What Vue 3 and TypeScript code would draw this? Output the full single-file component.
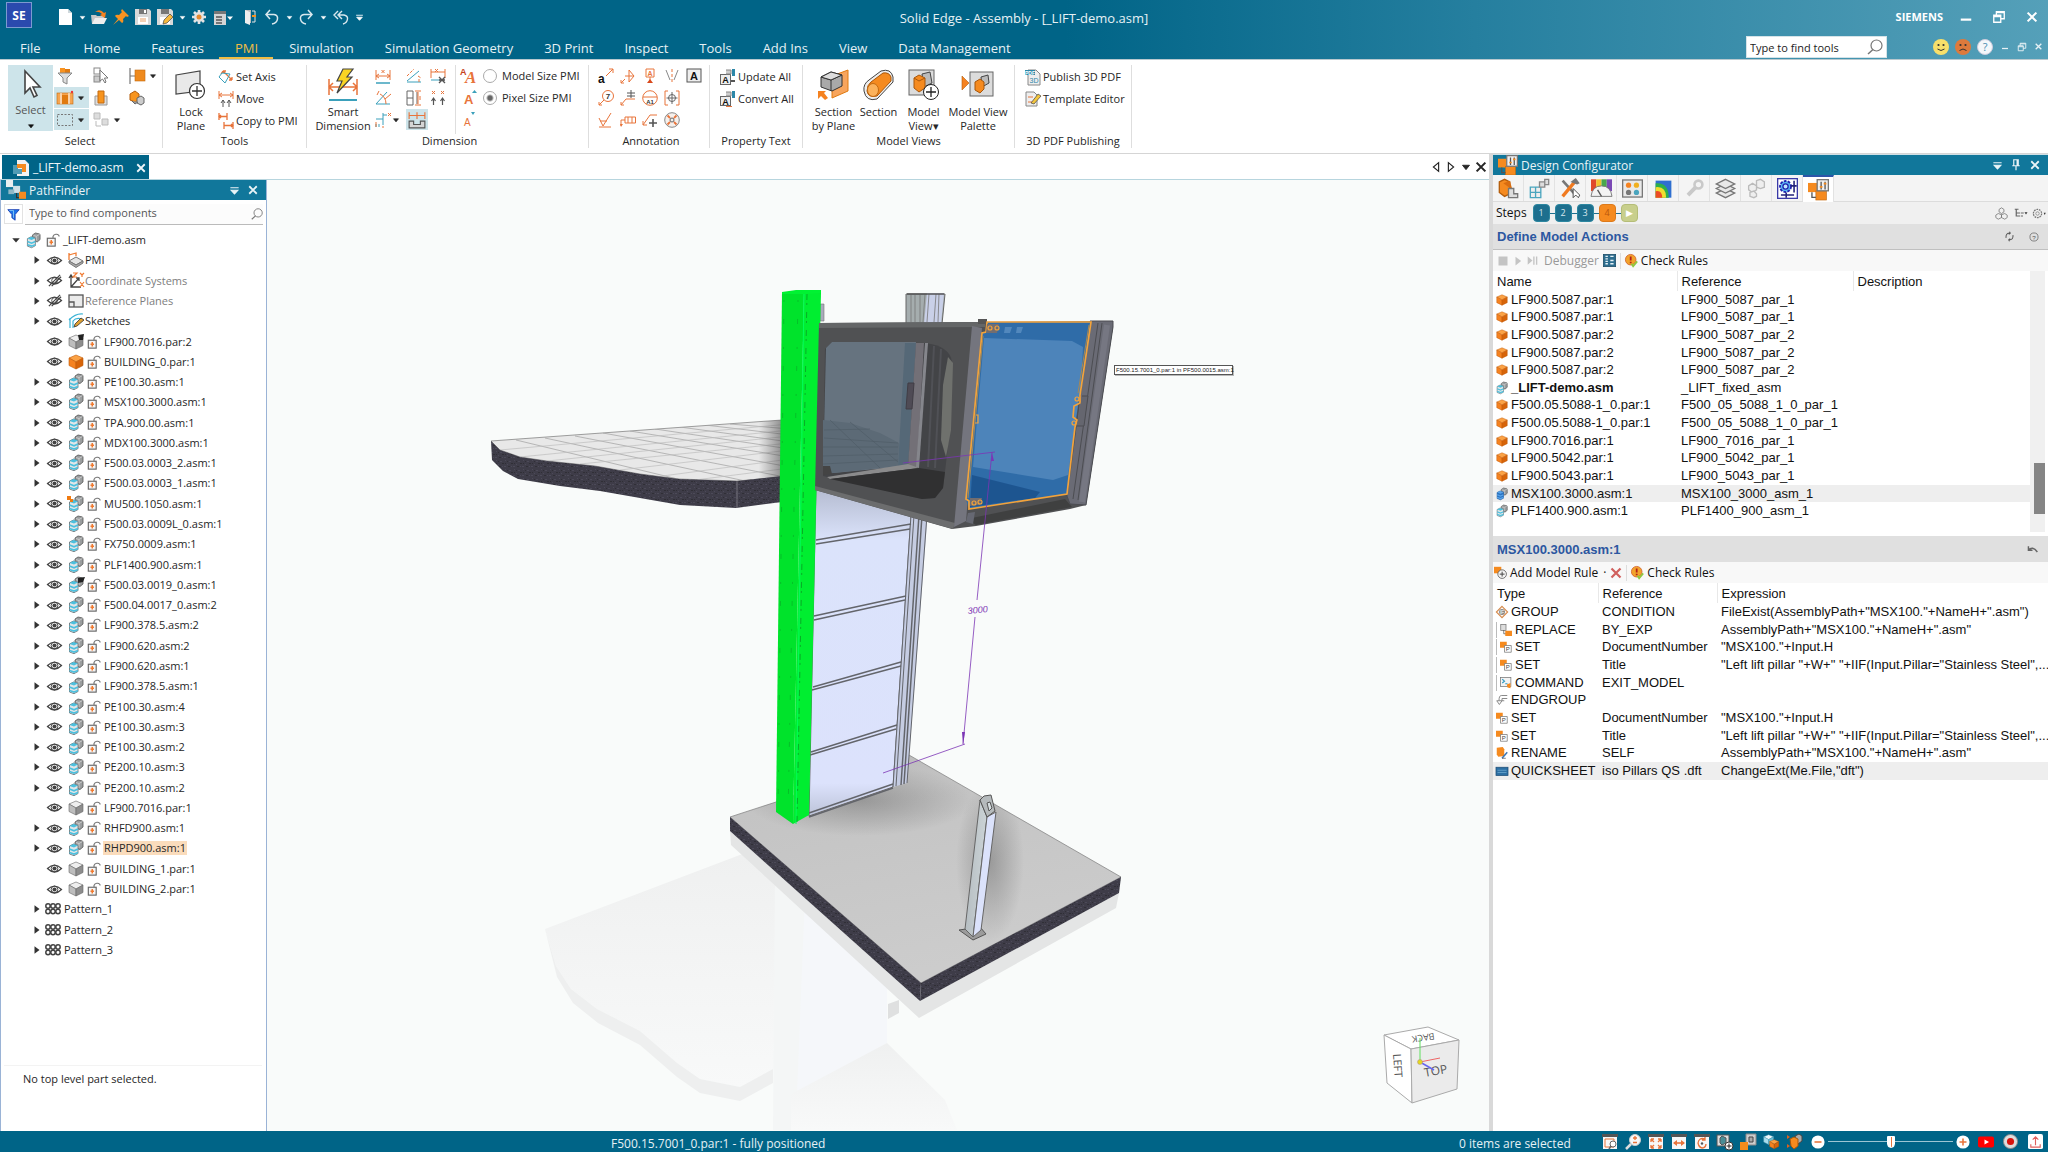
<script setup lang="ts">
import { h, ref } from 'vue'

const O = '#e8743b'
const T = '#3ba0bb'

const cube = (a: string, b: string, c: string, s: string) =>
  `<path d="M8 1L15 4 8 8 1 4Z" fill="${a}" stroke="${s}" stroke-width=".6"/><path d="M1 4L8 8V15L1 11.500Z" fill="${b}" stroke="${s}" stroke-width=".6"/><path d="M15 4L8 8V15L15 11.500Z" fill="${c}" stroke="${s}" stroke-width=".6"/>`
const asm = (a: string, b: string, s: string) =>
  `<path d="M7 2L10 0 14.500 1 15 2V7L12 9.500 7 8Z" fill="#9a9d9e" stroke="#555" stroke-width=".8"/><path d="M8 2.500L11 3.500 14.500 1.500M11 3.500V8" fill="none" stroke="#d5d5d5" stroke-width=".8"/><path d="M1.500 6L5.500 4 10 5.500V13.500L6 15.700 1.500 14Z" fill="${b}" stroke="${s}" stroke-width=".8"/><path d="M1.500 6L5.500 4 10 5.500 6 7.500Z" fill="${a}"/><path d="M1.500 9L6 10.800 10 9M1.500 12.500L6 14 10 12.500" fill="none" stroke="${a}" stroke-width="1.700"/>`
const dim = `<path d="M1 3V13M15 3V13M1 8H15M4 6L1 8 4 10M12 6L15 8 12 10" fill="none" stroke="${O}"/>`
const frame = `<rect x="1" y="1" width="14" height="14" fill="#f7f7f7"/><path d="M0 0H16V3H0Z" fill="#555"/>`

const icons: Record<string, string> = {
  doc: '<path d="M2 0H11L15 4V16H2Z" fill="#fff"/><path d="M11 0V4H15" fill="#cfd8dc"/>',
  open: '<path d="M0 6H5L6 7H13V15H1Z" fill="#c8c8c8"/><path d="M1 15L4 9H16L13 15Z" fill="#eee"/><path d="M4 3Q9-1 13 4L15 3 14 9 9 6 11 5Q8 2 4 3Z" fill="#f58220"/>',
  pin: '<path d="M9 0L16 7 14 8 13 7 10 10Q11 13 9 14L6 11 0 16 5 10 2 7Q3 5 6 6L9 3 8 2Z" fill="#f99320"/>',
  save: '<path d="M0 0H14L16 2V16H0Z" fill="#d9d9d9"/><rect x="4" y="0" width="8" height="5" fill="#777"/><rect x="9" y="1" width="2" height="3" fill="#fff"/><rect x="3" y="8" width="10" height="7" fill="#fff"/><path d="M5 10H11M5 12H11" stroke="#e9a36c"/>',
  saveas: '<path d="M0 0H14L16 2V16H0Z" fill="#d9d9d9"/><rect x="4" y="0" width="8" height="5" fill="#777"/><rect x="3" y="8" width="10" height="7" fill="#fff"/><path d="M6 15L7 11 13 5 16 8 10 14Z" fill="#f5b83d" stroke="#444" stroke-width=".7"/>',
  gear: '<path d="M8 1V15M1 8H15M3 3L13 13M13 3L3 13" stroke="#e3e3e3" stroke-width="2.600"/><circle cx="8" cy="8" r="5" fill="#e3e3e3"/><circle cx="8" cy="8" r="2.500" fill="#e88a2e"/>',
  list: '<rect x="0" y="1" width="12" height="14" fill="#d5d5d5"/><rect x="0" y="1" width="12" height="3" fill="#777"/><path d="M2 7H8M2 10H8M2 13H8" stroke="#555" stroke-width="1.500"/><path d="M13 6.500H19L16 10Z" fill="#fff"/>',
  exit: '<path d="M3 1H9V14H3Z" fill="#bbb"/><path d="M3 1L8 3V16L3 14Z" fill="#eee"/><path d="M10 2H13V13H10" fill="none" stroke="#e3e3e3"/><path d="M14 7L10 7" stroke="#f99320" stroke-width="2"/>',
  undo: '<path d="M6 1L2 5.500 6 10M2 5.500H10Q14 6 13.500 10 13 14 8 15" fill="none" stroke="#d9e8ee" stroke-width="1.500"/>',
  redo: '<path d="M10 1L14 5.500 10 10M14 5.500H6Q2 6 2.500 10 3 14 8 15" fill="none" stroke="#d9e8ee" stroke-width="1.500"/>',
  undoall: '<path d="M5 2L1 6 5 10M9 2L5 6 9 10M6 6H11Q15 7 14.500 10 14 14 10 15" fill="none" stroke="#d9e8ee" stroke-width="1.400"/>',
  car: '<path d="M4 6H12L8 11Z" fill="currentColor" stroke="currentColor"/>',
  carbar: '<path d="M2 4H14M3 7.500H13L8 13Z" fill="currentColor" stroke="currentColor" stroke-width="1.500"/>',
  mini: '<path d="M2 11H14" stroke="currentColor" stroke-width="2.500"/>',
  rest: '<path d="M5 6V2H14V10H10M2 6H10V14H2ZM2 7.500H10M5 3H14" fill="none" stroke="currentColor" stroke-width="1.500"/>',
  x: '<path d="M3 3L13 13M13 3L3 13" stroke="currentColor" stroke-width="2.400"/>',
  pinv: '<path d="M5 1H11V9H5ZM9.500 1V9M3 9H13M8 9V15" fill="none" stroke="currentColor" stroke-width="1.600"/>',
  mag: '<circle cx="9.500" cy="6.500" r="5.500" fill="none" stroke="#777" stroke-width="1.200"/><path d="M6 10.500L1 15" stroke="#777" stroke-width="1.500"/>',
  smile: '<circle cx="8" cy="8" r="8" fill="#f8df6a"/><circle cx="5.500" cy="6" r="1.100" fill="#333"/><circle cx="10.500" cy="6" r="1.100" fill="#333"/><path d="M4.500 10Q8 13 11.500 10" fill="none" stroke="#333"/>',
  sad: '<circle cx="8" cy="8" r="8" fill="#dd7a3c"/><circle cx="5.500" cy="6" r="1.100" fill="#333"/><circle cx="10.500" cy="6" r="1.100" fill="#333"/><path d="M4.500 11.500Q8 8.500 11.500 11.500" fill="none" stroke="#333"/>',
  help: '<circle cx="8" cy="8" r="7.500" fill="#f4f7fa" stroke="#ccd"/><text x="8" y="12" font-size="11" font-family="Open Sans" text-anchor="middle" fill="#4b8db0">?</text>',
  cursor: '<path d="M10 2V24L15 19 19 28 22 26.500 18 18H25Z" fill="#fff" stroke="#444" stroke-width="1.600"/>',
  filt: `<path d="M3 0H8V5H3Z" fill="#f99320"/><path d="M8 1H13V5H8Z" fill="#e07a10"/><path d="M1 5H15L10 10V16L6 14V10Z" fill="#ddd" stroke="#888"/>`,
  selbox: '<rect x="1" y="0" width="6" height="6" fill="none" stroke="#888"/><rect x="1" y="8" width="6" height="6" fill="#ccc" stroke="#888"/><path d="M7 2V13L9.500 11 12 15 13 14 11.500 10H15Z" fill="#fff" stroke="#777"/>',
  tag: '<path d="M1 0V16M1 8H6" stroke="#777" stroke-width="1.200"/><rect x="6" y="2" width="10" height="11" fill="#ef8a1d" stroke="#c46a10" stroke-width=".6"/>',
  selo: '<rect x="0" y="3" width="16" height="11" fill="#f7a550" stroke="#c46a10" stroke-width=".6"/><path d="M4 3V14M12 3V14" stroke="#fff"/><rect x="5" y="5" width="6" height="9" fill="#e07a10"/><circle cx="15" cy="2" r="1.200" fill="#e33"/>',
  part: '<path d="M2 6H14V15H2Z" fill="#ddd" stroke="#999"/><path d="M5 1H11V13H5Z" fill="#f7941e" stroke="#c46a10"/>',
  parts: '<path d="M1 4L6 1 10 4V10L6 12 1 10Z" fill="#f7941e" stroke="#b45d0b"/><path d="M8 8L12 6 15 8V13L12 15 8 13Z" fill="#ccc" stroke="#666"/><path d="M3 11L6 14 9 12" fill="#999" stroke="#666"/>',
  dash: '<rect x="0.500" y="2.500" width="15" height="11" fill="none" stroke="#777" stroke-dasharray="2 1.500"/>',
  grays: '<path d="M1 1H7V7H1ZM9 7H15V13H9Z" fill="#ddd" stroke="#bbb"/><path d="M3 9V14H8" fill="none" stroke="#bbb"/>',
  lock: '<path d="M1 6L25 2V22L1 25Z" fill="#e9e9e9" stroke="#444" stroke-width="1.200"/><circle cx="22" cy="22" r="7.500" fill="#fff" stroke="#333" stroke-width="1.200"/><path d="M22 17V27M17 22H27" stroke="#333" stroke-width="1.300"/>',
  axis: `<path d="M5 2L14 11M5 2L3 5M5 2L8 2M14 11V8M14 11H11" stroke="${O}" stroke-width="1.300" fill="none"/><path d="M1 8L7 14L12 5L4 4Z" fill="none" stroke="${T}"/>`,
  move: `<path d="M1 0V8M15 0V8M1 4H15M4 2L1 4 4 6M12 2L15 4 12 6" fill="none" stroke="${O}"/><path d="M5 16V9M11 16V9M3 12L5 9 7 12M9 12L11 9 13 12" fill="none" stroke="#555"/>`,
  copyp: `<path d="M1 0V7M9 0V7M1 3.500H9M6 9V16M15 9V16M6 12.500H15M3 2L1 3.500 3 5M13 11L15 12.500 13 14" fill="none" stroke="${O}" stroke-width="1.300"/>`,
  smart: `<path d="M2 10V26M30 10V26M2 18H30M6 14L2 18 6 22M26 14L30 18 26 22" fill="none" stroke="${O}" stroke-width="1.500"/><path d="M2 31H30" stroke="${T}" stroke-width="2"/><path d="M16 0H26L20 8H25L10 24 15 12H10Z" fill="#f9d423" stroke="#444" stroke-width="1.200"/>`,
  d1: `${dim.replace('M1 3V13M15 3V13', 'M1 2V12M15 2V12')}<path d="M6.500 2L9.500 5M9.500 2L6.500 5" stroke="${O}"/><path d="M1 15H15" stroke="${T}" stroke-width="1.500"/>`,
  d2: `<path d="M1 14L12 2M1 14H15" stroke="${T}" fill="none"/><path d="M5 4Q11 7 11 14M10 9L16 4M4 1L2 5" fill="none" stroke="${O}"/>`,
  d3: `<path d="M1 13L13 3M1 14H15" stroke="${T}"/><path d="M1 8L8 1M12 8L15 10M13 14V11" stroke="${O}" stroke-dasharray="3 1.500"/>`,
  d4: `<path d="M1 1V10M15 1V10M1 4H15M5 1L8 4M8 1L5 4" stroke="${O}"/><path d="M1 12H10" stroke="${T}"/><path d="M9 9L15 15M15 9L9 15M9 12H15" stroke="#555" stroke-width="1.400"/>`,
  d5: `<path d="M1 1H7V15H1ZM7 8H1M11 2V14" fill="none" stroke="#666"/><path d="M9 1H15M9 15H15M12 2V14M14 6V10" stroke="${O}"/>`,
  d6: `<path d="M2 1L5 4M5 1L2 4M11 1L14 4M14 1L11 4" stroke="${O}"/><path d="M3.500 15V8M12.500 15V8M1.500 11L3.500 8 5.500 11M10.500 11L12.500 8 14.500 11" fill="none" stroke="#555" stroke-width="1.200"/>`,
  d7: `<path d="M8 1V13M1 7H8M8 3H12M1 15V12M4 15V12" stroke="${T}" fill="none"/><path d="M1 10V15M8 14V16M13 1L16 4M16 1L13 4" stroke="${O}"/>`,
  d8: `<path d="M1 1V7M8 1V7M15 1V7M1 4H15" stroke="${O}"/><path d="M1 9H5V12H11V9H15V15H1Z" fill="#d5d5d5" stroke="#555"/>`,
  a1: `<text x="4" y="15" font-size="17" font-weight="bold" font-style="italic" font-family="Liberation Serif" fill="${O}">A</text><text x="-1" y="7" font-size="9" font-weight="bold" font-family="Liberation Sans" fill="#c5401b">A</text>`,
  a2: `<text x="3" y="14" font-size="13" font-weight="bold" font-family="Liberation Sans" fill="${O}">A</text><path d="M11 3L13.500 0 16 3Z" fill="${T}"/>`,
  a3: `<text x="3" y="14" font-size="10" font-family="Liberation Sans" fill="${O}">A</text><path d="M10 0L12 3 14 0Z" fill="${T}"/>`,
  n1: `<text x="0" y="15" font-size="12" font-weight="bold" font-family="Liberation Sans" fill="#111">a</text><path d="M8 8L15 1M11 1H15V5" fill="none" stroke="${O}"/>`,
  n2: `<path d="M1 15L5 11M5 8H14L9 2V14L14 8M1 12V15H4" fill="none" stroke="${O}"/>`,
  n3: `<path d="M4 1H12V9H4ZM8 9V12" fill="none" stroke="${O}"/><path d="M5 15L8 11 11 15Z" fill="#d8491c"/><text x="8" y="8" font-size="7" font-weight="bold" text-anchor="middle" font-family="Liberation Sans" fill="${O}">A</text>`,
  n4: `<path d="M2 2L6 12M14 2L10 12" stroke="#888"/><path d="M8 1V15" stroke="${O}" stroke-dasharray="3 2"/>`,
  n5: '<rect x="1" y="1" width="14" height="13" fill="#eee" stroke="#555"/><text x="8" y="12" font-size="11" font-weight="bold" text-anchor="middle" font-family="Liberation Sans" fill="#111">A</text>',
  n6: `<circle cx="10" cy="6" r="5.500" fill="none" stroke="${O}"/><path d="M6 10L1 15M1 12V15H4" fill="none" stroke="${O}"/><text x="10" y="9" font-size="8" font-weight="bold" text-anchor="middle" font-family="Liberation Sans" fill="#333">7</text>`,
  n7: `<path d="M1 15L6 9H15M1 12V15H4" fill="none" stroke="${O}"/><path d="M11 0V8M7 3H15M7 6H15" stroke="#555"/>`,
  n8: `<circle cx="8" cy="8" r="7.300" fill="none" stroke="${O}"/><path d="M1 7H15" stroke="${O}"/><text x="8" y="13.500" font-size="6" font-weight="bold" text-anchor="middle" font-family="Liberation Sans" fill="#333">A1</text>`,
  n9: `<path d="M4 1H1V15H4M12 1H15V15H12" fill="none" stroke="${O}"/><circle cx="8" cy="8" r="3.500" fill="none" stroke="#666"/><path d="M8 2V14M2.500 8H13.500" stroke="#666"/>`,
  n10: `<path d="M1 6L5 14 13 1M1 15H13M2 9H9" fill="none" stroke="${O}"/>`,
  n11: `<path d="M5 5H15.500V11H5ZM1 14V8H5M8 5V11M12 5V11" fill="none" stroke="${O}"/><path d="M0 12L1 15 3 12" fill="${O}"/>`,
  n12: `<path d="M1 13L8 3H15M1 9V13H5" fill="none" stroke="${O}"/><path d="M11 7V15M7 11H15" stroke="#555" stroke-width="1.600"/>`,
  n13: `<circle cx="8" cy="8" r="7.300" fill="#f6f0ec" stroke="#888"/><circle cx="8" cy="8" r="2" fill="none" stroke="#666"/><path d="M3.500 3.500L6 6M12.500 3.500L10 6M3.500 12.500L6 10M12.500 12.500L10 10" stroke="${O}" stroke-width="1.800"/>`,
  upd: `<rect x="0.500" y="5.500" width="10" height="10" fill="#eee" stroke="#666"/><text x="5.500" y="14" font-size="9" font-weight="bold" text-anchor="middle" font-family="Liberation Sans" fill="#111">A</text><path d="M6 1H11V5H6" fill="#ccc" stroke="#888"/><path d="M12 0H15V7H12Z" fill="#2d87a8"/><path d="M11 12H15" stroke="#555" stroke-width="2"/>`,
  conv: `<rect x="0.500" y="5.500" width="10" height="9" fill="#eee" stroke="#666"/><text x="5.500" y="13.500" font-size="9" font-weight="bold" text-anchor="middle" font-family="Liberation Sans" fill="#111">A</text><path d="M6 1H11V5H6" fill="#ccc" stroke="#888"/><path d="M12 0H15V7H12Z" fill="#2d87a8"/><path d="M6 15.500H12" stroke="${O}"/>`,
  secp: '<path d="M14 7L30 1V22L14 29Z" fill="#f7a55d" stroke="#e07a10"/><path d="M3 8L13 3 24 6V17L14 22 3 18Z" fill="#a9a9a9" stroke="#333"/><path d="M3 8L13 11 24 6M13 11V22" fill="none" stroke="#333"/><path d="M3 8L13 3 24 6 13 11Z" fill="#ddd" stroke="#333"/><path d="M0 22H8L6 24 10 29 7 31 3 27 0 30Z" fill="#f58220"/>',
  sect: '<path d="M1 22Q0 15 6 11L18 2Q28-1 30 8V13L14 30Q3 33 1 22Z" fill="#eee" stroke="#444"/><path d="M4 22Q4 16 8 13L20 4Q26 3 28 8V12L14 27Q5 29 4 22Z" fill="#f58a1f" stroke="#a8560a"/><ellipse cx="10" cy="21" rx="5.500" ry="6.500" fill="#fbb25c" stroke="#c46a10"/>',
  mview: '<rect x="1" y="1" width="25" height="25" fill="#dcdcdc" stroke="#666"/><path d="M14 5L22 3 24 14 16 18Z" fill="#bbb" stroke="#444"/><path d="M6 9L11 6 17 9V19L11 23 6 19Z" fill="#f58a1f" stroke="#a8560a"/><path d="M6 9L11 12 17 9" fill="none" stroke="#a8560a"/><circle cx="23" cy="23" r="7.500" fill="#fff" stroke="#222"/><path d="M23 18V28M18 23H28" stroke="#222" stroke-width="1.300"/>',
  mpal: '<path d="M0 7L7 14 0 21Z" fill="#f58220" stroke="#b45d0b" stroke-width=".6"/><rect x="8" y="3" width="23" height="24" fill="#dcdcdc" stroke="#666"/><path d="M19 8L26 6 27 14 20 18Z" fill="#bbb" stroke="#444"/><path d="M13 13L18 10 22 13V20L18 24 13 21Z" fill="#f58a1f" stroke="#a8560a"/>',
  pdf: '<path d="M3 1H11L15 5V16H3Z" fill="#eee" stroke="#888"/><rect x="0" y="1" width="10" height="5" fill="#2d87a8"/><text x="5" y="5.500" font-size="5" font-weight="bold" text-anchor="middle" font-family="Liberation Sans" fill="#fff">PDF</text><text x="9" y="14" font-size="7" text-anchor="middle" font-family="Liberation Sans" fill="#2d87a8">3D</text>',
  tmpl: `<path d="M1 1H9L12 4V15H1Z" fill="#eee" stroke="#888"/><path d="M3 6H8M3 11H10" stroke="${O}"/><path d="M6 12L13 3 16 5 9 13Z" fill="#f5c73d" stroke="#444" stroke-width=".7"/>`,
  tabdoc: '<path d="M4 0H12L16 4V16H4Z" fill="#f2f2f2"/><path d="M0 5H5V9H9V14H0Z" fill="#4f9bb5"/><path d="M4 4H13V12H9V8H4Z" fill="#f58a1f"/>',
  pf: '<rect x="0" y="0" width="6" height="6" fill="#e9eef0"/><rect x="6" y="5" width="6" height="6" fill="#cfe0e6"/><rect x="2" y="8" width="5" height="4" fill="#8fb8c6"/><path d="M9 11V15H12" stroke="#333" fill="none"/><rect x="11" y="10" width="6" height="6" fill="#f58a1f"/>',
  funnel: '<path d="M1 2H15L10 8V15L6 12V8Z" fill="#1e73e8" stroke="#1238b0"/><path d="M3 3H8L8 12" fill="none" stroke="#8fd0f5"/>',
  cd: '<path d="M2 5H14L8 12Z" fill="#333"/>',
  cr: '<path d="M4 2L12 8 4 14Z" fill="#333"/>',
  eye: '<path d="M0.500 8Q8 0.500 15.500 8 8 15.500 0.500 8Z" fill="#fff" stroke="#444" stroke-width="1.300"/><circle cx="8" cy="8" r="3.600" fill="none" stroke="#444"/><circle cx="8" cy="8" r="2.200" fill="#444"/>',
  eyeoff: '<path d="M0.500 8Q8 0.500 15.500 8 8 15.500 0.500 8Z" fill="#fff" stroke="#444" stroke-width="1.300"/><circle cx="8" cy="8" r="3" fill="none" stroke="#444"/><path d="M2 14L14 2M5 14L15 4" stroke="#444" stroke-width="1.300"/>',
  asm: asm('#4cc0de', '#e2e6e8', '#5d6b70'),
  asmblue: asm('#5aa5ea', '#2a74c4', '#1d5599'),
  asmfree: asm('#4cc0de', '#e2e6e8', '#5d6b70') + '<path d="M-1 0H3V3H5V6H2V4H-1Z" fill="#f07a10"/>',
  asmpin: asm('#4cc0de', '#e2e6e8', '#5d6b70') + '<path d="M10 1L17 0 15 5 10 6Z" fill="#222"/>',
  partg: cube('#eee', '#bdbdbd', '#8d8d8d', '#666'),
  partpin: cube('#eee', '#bdbdbd', '#8d8d8d', '#666') + '<path d="M10 1L16 0 15 6 11 6Z" fill="#222"/>',
  parto: cube('#fba245', '#f58220', '#d76409', '#c05a08'),
  ulock: '<rect x="1.500" y="6" width="9" height="9" fill="#f4f4f4" stroke="#666" stroke-width="1.300"/><path d="M8 6V4Q9 1 12 1.500 15 2 15 4" fill="none" stroke="#777" stroke-width="1.300"/><path d="M6 8V13M4 10.500H8" stroke="#f07a30" stroke-width="1.700"/>',
  pmi: '<path d="M1 9L8 5 15 9 8 13Z" fill="#e5e5e5" stroke="#777"/><path d="M1 9V11L8 15.500 15 11V9L8 13Z" fill="#aaa" stroke="#777"/><path d="M1 8V1M1 3L8 1V4" fill="none" stroke="#f07a30" stroke-width="1.300"/>',
  cs: '<path d="M3 3V14H13M3 14L11 5M8 5H11V8M1 5L3 2 5 5" fill="none" stroke="#444" stroke-width="1.300"/><path d="M5 0H9L5 4H9M12 0L14 2M14 2V4M16 0L14 2M12 9L16 14M16 9L12 14" fill="none" stroke="#f07a30" stroke-width="1.200"/>',
  rp: '<rect x="1" y="2" width="14" height="12" fill="#eaeaea" stroke="#555" stroke-width="1.300"/><path d="M1 9H6V14" fill="none" stroke="#555" stroke-width="1.300"/>',
  sk: '<path d="M2 15V5M1 7Q8 0 15 1M5 15V8Q8 4 14 6" fill="none" stroke="#3bb3d6" stroke-width="1.200"/><path d="M6 14L7 11 13 5 16 7 9 13Z" fill="#e0a030" stroke="#333" stroke-width=".8"/>',
  pat: '<g fill="none" stroke="#444" stroke-width="1.500"><circle cx="3" cy="5" r="2.200"/><circle cx="8" cy="5" r="2.200"/><circle cx="13" cy="5" r="2.200"/><circle cx="3" cy="10.500" r="2.200"/><circle cx="8" cy="10.500" r="2.200"/><circle cx="13" cy="10.500" r="2.200"/></g>',
  dc: '<rect x="0" y="3" width="7" height="7" fill="#f58a1f"/><rect x="6" y="9" width="8" height="7" fill="#f58a1f" stroke="#c46a10" stroke-width=".5"/><path d="M3 10V14H6" fill="none" stroke="#555"/><rect x="7" y="0.500" width="8.500" height="8.500" fill="#f1f1f1" stroke="#777"/><path d="M10 2V8M13 2V8" stroke="#555"/><path d="M12 3.500H14M9 6H11" stroke="#f58a1f" stroke-width="1.300"/>',
  t1: '<path d="M1 3L5 1 9 3V12L5 14 1 11Z" fill="#f58a1f" stroke="#b45d0b"/><path d="M4 4L9 2 11 9" fill="#d96d10"/><path d="M8 8H12V12H15V15H8Z" fill="#ddd" stroke="#777"/>',
  t2: '<path d="M1 7H5V11H1ZM5 7H9V11H5ZM1 11H5V15H1ZM5 11H9V15H5Z" fill="#eee" stroke="#4aa5be"/><path d="M8 3H12V7H8ZM12 1H15V5H12Z" fill="#ddd" stroke="#888"/>',
  t3: '<path d="M2 2L12 13" stroke="#777" stroke-width="2"/><path d="M12 2L2 14" stroke="#f07a20" stroke-width="2.500"/><path d="M8 3L12 0 15 4 13 5Z" fill="#777"/><path d="M10 8V15L12 13 14 15 15 13Z" fill="#fff" stroke="#444" stroke-width=".7"/>',
  t4: '<rect x="0" y="1" width="4" height="9" fill="#e04a2b"/><rect x="4" y="1" width="4" height="6" fill="#f4c430"/><rect x="8" y="1" width="4" height="6" fill="#49a84d"/><rect x="12" y="1" width="4" height="9" fill="#7b49b5"/><path d="M0 14Q1 6 8 6T16 14Z" fill="#f3f3f3" stroke="#777" stroke-width=".7"/><path d="M8 14L5 9" stroke="#555"/>',
  t5: '<rect x="0.500" y="1.500" width="15" height="13" fill="#e9e9e9" stroke="#777"/><circle cx="5" cy="5.500" r="2" fill="#f58220"/><circle cx="11" cy="5.500" r="2" fill="#f0b020"/><circle cx="5" cy="11" r="2" fill="#777"/><circle cx="11" cy="11" r="2" fill="#4aa5be"/>',
  t6: '<rect x="2" y="2" width="12" height="13" fill="#2f6fd0"/><path d="M2 4Q12 3 12 15H2Z" fill="#2fb04a"/><path d="M2 7Q10 6 10 15H2Z" fill="#f2dd30"/><path d="M2 10Q7 9 7 15H2Z" fill="#ec4c25"/>',
  t7: '<circle cx="11" cy="5" r="3" fill="none" stroke="#c9c9c9" stroke-width="2"/><path d="M9 7L3 13" stroke="#c9c9c9" stroke-width="3"/>',
  t8: '<g fill="#e8e8e8" stroke="#777"><path d="M8 8L15 11.500 8 15 1 11.500Z"/><path d="M8 4.500L15 8 8 11.500 1 8Z"/><path d="M8 1L15 4.500 8 8 1 4.500Z"/></g>',
  t9: '<g fill="#eee" stroke="#bbb"><path d="M8 2L11 1 14 3V7L11 8 8 7Z"/><path d="M2 6L5 4 8 6V9L5 11 2 9Z"/><path d="M3 11L6 10 8 12V14L6 15 3 14Z"/></g>',
  t10: '<rect x="0.500" y="0.500" width="15" height="15" fill="#fff" stroke="#3a3aa8" stroke-width="1"/><circle cx="6.500" cy="6.500" r="4.200" fill="#59b8f2" stroke="#2222b0" stroke-width="1.400" stroke-dasharray="2 1"/><circle cx="6.500" cy="6.500" r="2" fill="#bfe6ff" stroke="#2222b0"/><path d="M13 2V11M10.500 6H15M3 13H13M7 11V15" stroke="#22227a" stroke-width="1.200"/>',
  stp: '<rect x="2" y="2" width="12" height="12" fill="#c4c4c4"/>',
  ply: '<path d="M4 1L13 8 4 15Z" fill="#c4c4c4"/>',
  plb: '<path d="M1 2L8 8 1 14ZM9 2H11V14H9ZM13 2H15V14H13Z" fill="#c4c4c4"/>',
  dbg: '<rect x="0.500" y="0.500" width="15" height="15" fill="#2d6d8e" stroke="#20506a"/><path d="M3 3H6M3 6H6M3 9H6M3 12H6M9 3H13M9 8H13M9 12H13" stroke="#e6f2f7" stroke-width="1.600"/>',
  chk: '<circle cx="7" cy="7" r="6.500" fill="#f2a32b" stroke="#d3602a"/><path d="M7 3V8M7 9.500V11.500" stroke="#b3201a" stroke-width="2.200"/><path d="M8 12L10 15 15 9" fill="none" stroke="#8fc63d" stroke-width="2.200"/>',
  boxes: '<g fill="none" stroke="#777"><path d="M8 1L11 3V6L8 8 5 6V3ZM4 8L8 9.500V13L4 15 1 13V10ZM12 8L15 10V13L12 15 8 13V9.500Z"/></g>',
  tree: '<path d="M1 3H6M3 3V12H8M3 8H8M9 8H13M9 12H12" fill="none" stroke="#666" stroke-width="1.600"/><path d="M14 7H18L16 10Z" fill="#333"/>',
  cog: '<circle cx="8" cy="8" r="6" fill="none" stroke="#777" stroke-width="1.800" stroke-dasharray="2.500 1.200"/><circle cx="8" cy="8" r="2.500" fill="none" stroke="#777"/><path d="M17 7H20L18.500 10Z" fill="#333"/>',
  sync: '<path d="M3 10Q2 3 9 3L8 1M9 3L7 5M13 6Q14 13 7 13L8 15M7 13L9 11" fill="none" stroke="#555" stroke-width="1.500"/>',
  hq: '<circle cx="8" cy="8" r="6.500" fill="none" stroke="#666" stroke-width="1.200"/><text x="8" y="12" font-size="10" text-anchor="middle" font-family="Liberation Sans" fill="#555">?</text>',
  back: '<path d="M3 4V9H8M3 9Q8 3 14 11" fill="none" stroke="#666" stroke-width="1.800"/>',
  addr: '<path d="M0 1H9V9H0Z" fill="#f58a1f"/><circle cx="10" cy="10" r="5.300" fill="#f4f4f4" stroke="#555"/><path d="M10 7V13M7 10H13" stroke="#444" stroke-width="1.200"/>',
  del: '<path d="M2 2L14 14M14 2L2 14" stroke="#d0605e" stroke-width="3"/>',
  grp: '<path d="M8 0.500L15.500 8 8 15.500 0.500 8Z" fill="#fff7ef" stroke="#d58a4c" stroke-width="1.500"/><circle cx="8" cy="8" r="4" fill="#888"/><text x="8" y="11" font-size="7" text-anchor="middle" font-family="Liberation Sans" fill="#fff">IF</text>',
  rep: '<rect x="1" y="0.500" width="7" height="8" fill="#ddd" stroke="#777"/><path d="M5 8V13H8" fill="none" stroke="#555"/><path d="M7 9H16V16H7Z" fill="#f58a1f"/>',
  set: '<path d="M0 1H9V9H0Z" fill="#f58a1f"/><path d="M6 6H15V15H6Z" fill="#fff" stroke="#777"/><text x="10.500" y="13.500" font-size="8" text-anchor="middle" font-family="Liberation Sans" fill="#444">P</text>',
  cmd: '<rect x="0.500" y="0.500" width="14" height="12" fill="#f3f3f3" stroke="#777"/><path d="M3 3L6 5.500 3 8M7 9H10" fill="none" stroke="#2f9ac4" stroke-width="1.500"/><path d="M9 10L14 8V15L10 14Z" fill="#f58a1f"/>',
  endg: '<path d="M15 2H7Q4 2 4 9M1 9L4.500 14 8 9ZM15 6H8V9H11" fill="none" stroke="#888" stroke-width="1.300"/>',
  ren: '<path d="M1 1L9 0 11 3V12L3 13 1 10Z" fill="#f58a1f"/><path d="M8 15L15 7" stroke="#3d77b5" stroke-width="2"/><path d="M8 15H13" stroke="#555"/>',
  qs: '<rect x="0" y="3" width="16" height="11" fill="#2c6fa3" stroke="#1d4d77"/><path d="M2 7H14M2 10H14" stroke="#6da9d0"/>',
  s1: `${frame}<path d="M3 5H12V13H3Z" fill="none" stroke="${O}"/><circle cx="11" cy="10" r="3" fill="#fff" stroke="#666"/><path d="M9 12L7 15" stroke="#666" stroke-width="1.500"/>`,
  s2: `<circle cx="10" cy="6" r="5.500" fill="#f7f7f7" stroke="#ccc"/><path d="M6 10L1 15" stroke="#ddd" stroke-width="2.500"/><path d="M10 2V6M8 4H12M8 8.500H12" stroke="${O}" stroke-width="1.300"/>`,
  s3: `${frame}<path d="M3 5L6 8M3 5H6M3 5V8M13 5L10 8M13 5H10M13 5V8M3 14L6 11M3 14H6M3 14V11M13 14L10 11M13 14H10M13 14V11" stroke="${O}" stroke-width="1.300"/>`,
  s4: `${frame}<path d="M3 9H13" stroke="${O}" stroke-width="1.600"/><path d="M6 6L2 9 6 12ZM10 6L14 9 10 12Z" fill="${O}"/>`,
  s5: `${frame}<path d="M11 5Q5 3 4 9 5 14 9 14 12 13 12 10M11 3V6H8" fill="none" stroke="${O}" stroke-width="1.300"/><circle cx="8" cy="9.500" r="1.200" fill="#555"/>`,
  s6: '<rect x="0" y="1" width="12" height="11" fill="#ddd" stroke="#555"/><path d="M5 2L9 4V9L5 11 3 9V4Z" fill="#4a8d96" stroke="#555"/><circle cx="12" cy="12" r="4" fill="#fff" stroke="#333"/><path d="M12 9.500V14.500M9.500 12H14.500" stroke="#222"/>',
  s7: '<path d="M6 0H16V11H6Z" fill="#ccc" stroke="#888"/><path d="M9 3H13V8H9Z" fill="#aaa" stroke="#444"/><rect x="0" y="8" width="8" height="8" fill="#f28c1c"/>',
  s8: '<g transform="scale(.7)">' + cube('#eef7fa', '#a8dcec', '#6dbcd3', '#4a9ab3') + '</g><g transform="translate(6 5) scale(.65)">' + cube('#fba245', '#f58220', '#d76409', '#a85008') + '</g>',
  s9: '<path d="M1 1L4 3 1 5ZM1 10L4 12 1 14Z" fill="#e0601a"/><path d="M9 2L13 0 16 2V7L12 10Z" fill="#aaa" stroke="#444"/><path d="M4 5L8 3 12 5V12L8 15 5 12Z" fill="#f58a1f" stroke="#a8560a"/>',
  minus: `<circle cx="8" cy="8" r="7.500" fill="#fff"/><path d="M4 8H12" stroke="${O}" stroke-width="1.800"/>`,
  plus: `<circle cx="8" cy="8" r="7.500" fill="#fff"/><path d="M4 8H12M8 4V12" stroke="${O}" stroke-width="1.800"/>`,
  yt: '<rect x="0" y="2.500" width="16" height="11" rx="2" fill="#f00"/><path d="M6.500 5.500L11 8 6.500 10.500Z" fill="#fff"/>',
  rec: '<circle cx="8" cy="8" r="7.500" fill="#ddd" stroke="#888"/><circle cx="8" cy="8" r="3.800" fill="#d8120c"/>',
  up: '<rect x="0" y="0" width="16" height="16" rx="2" fill="#fff"/><path d="M8 12V3M5 6L8 3 11 6M3 11V14H13V11" fill="none" stroke="#e0605e" stroke-width="1.200"/>',
  tl: '<path d="M11 3L5 8 11 13Z" fill="none" stroke="#222" stroke-width="1.300"/>',
  tr: '<path d="M5 3L11 8 5 13Z" fill="none" stroke="#222" stroke-width="1.300"/>',
}

/* s = drawn size in px, v = edge of the square view box */
const Icon = (p: { n: string; s?: number; v?: number }) =>
  h('svg', {
    viewBox: `0 0 ${p.v ?? 16} ${p.v ?? 16}`,
    width: p.s ?? 16,
    height: p.s ?? 16,
    'aria-hidden': 'true',
    style: { flex: 'none', display: 'block', overflow: 'visible' },
    innerHTML: icons[p.n],
  })
Icon.props = ['n', 's', 'v']

const quick = ['doc', 'car', 'open', 'pin', 'save', 'saveas', 'car', 'gear', 'list', 'exit', 'undo', 'car', 'redo', 'car', 'undoall', 'carbar']
const tabs = ['File', 'Home', 'Features', 'PMI', 'Simulation', 'Simulation Geometry', '3D Print', 'Inspect', 'Tools', 'Add Ins', 'View', 'Data Management']
const notes = ['n1', 'n2', 'n3', 'n4', 'n5', 'n6', 'n7', 'n8', 'n9', '', 'n10', 'n11', 'n12', 'n13']
const pmiSize = ref('pixel')
const query = ref('')
const find = ref('')
const zoom = ref(50)

interface Node { t: string; i: string; exp?: boolean; off?: boolean; noLock?: boolean; hot?: boolean; pat?: boolean }
const a = (t: string, i = 'asm'): Node => ({ t, i, exp: true })
const p = (t: string, i = 'partg'): Node => ({ t, i })
const nodes: Node[] = [
  { t: 'PMI', i: 'pmi', exp: true, noLock: true },
  { t: 'Coordinate Systems', i: 'cs', exp: true, noLock: true, off: true },
  { t: 'Reference Planes', i: 'rp', exp: true, noLock: true, off: true },
  { t: 'Sketches', i: 'sk', exp: true, noLock: true },
  p('LF900.7016.par:2', 'partpin'), p('BUILDING_0.par:1', 'parto'),
  a('PE100.30.asm:1'), a('MSX100.3000.asm:1'), a('TPA.900.00.asm:1'), a('MDX100.3000.asm:1'),
  a('F500.03.0003_2.asm:1'), a('F500.03.0003_1.asm:1'), a('MU500.1050.asm:1', 'asmfree'),
  a('F500.03.0009L_0.asm:1'), a('FX750.0009.asm:1'), a('PLF1400.900.asm:1'),
  a('F500.03.0019_0.asm:1', 'asmpin'), a('F500.04.0017_0.asm:2'),
  a('LF900.378.5.asm:2'), a('LF900.620.asm:2'), a('LF900.620.asm:1'), a('LF900.378.5.asm:1'),
  a('PE100.30.asm:4'), a('PE100.30.asm:3'), a('PE100.30.asm:2'), a('PE200.10.asm:3'), a('PE200.10.asm:2'),
  p('LF900.7016.par:1'), a('RHFD900.asm:1'), { t: 'RHPD900.asm:1', i: 'asm', exp: true, hot: true },
  p('BUILDING_1.par:1'), p('BUILDING_2.par:1'),
  { t: 'Pattern_1', i: 'pat', exp: true, pat: true },
  { t: 'Pattern_2', i: 'pat', exp: true, pat: true },
  { t: 'Pattern_3', i: 'pat', exp: true, pat: true },
]

const models = [
  ['parto', 'LF900.5087.par:1', 'LF900_5087_par_1'],
  ['parto', 'LF900.5087.par:1', 'LF900_5087_par_1'],
  ['parto', 'LF900.5087.par:2', 'LF900_5087_par_2'],
  ['parto', 'LF900.5087.par:2', 'LF900_5087_par_2'],
  ['parto', 'LF900.5087.par:2', 'LF900_5087_par_2'],
  ['asm', '_LIFT-demo.asm', '_LIFT_fixed_asm'],
  ['parto', 'F500.05.5088-1_0.par:1', 'F500_05_5088_1_0_par_1'],
  ['parto', 'F500.05.5088-1_0.par:1', 'F500_05_5088_1_0_par_1'],
  ['parto', 'LF900.7016.par:1', 'LF900_7016_par_1'],
  ['parto', 'LF900.5042.par:1', 'LF900_5042_par_1'],
  ['parto', 'LF900.5043.par:1', 'LF900_5043_par_1'],
  ['asmblue', 'MSX100.3000.asm:1', 'MSX100_3000_asm_1'],
  ['asm', 'PLF1400.900.asm:1', 'PLF1400_900_asm_1'],
]
const title = '"Left lift pillar "+W+" "+IIF(Input.Pillar="Stainless Steel",...'
const asmPath = 'AssemblyPath+"MSX100."+NameH+".asm"'
const rules: [string, string, string, string, boolean][] = [
  ['grp', 'GROUP', 'CONDITION', 'FileExist(AssemblyPath+"MSX100."+NameH+".asm")', false],
  ['rep', 'REPLACE', 'BY_EXP', asmPath, true],
  ['set', 'SET', 'DocumentNumber', '"MSX100."+Input.H', true],
  ['set', 'SET', 'Title', title, true],
  ['cmd', 'COMMAND', 'EXIT_MODEL', '', true],
  ['endg', 'ENDGROUP', '', '', false],
  ['set', 'SET', 'DocumentNumber', '"MSX100."+Input.H', false],
  ['set', 'SET', 'Title', title, false],
  ['ren', 'RENAME', 'SELF', asmPath, false],
  ['qs', 'QUICKSHEET', 'iso Pillars QS .dft', 'ChangeExt(Me.File,"dft")', false],
]
const paneTabs = ['t1', 't2', 't3', 't4', 't5', 't6', 't7', 't8', 't9', 't10', 'dc']
const statusIcons = ['s1', 's2', 's3', 's4', 's5', 's6', 's7', 's8', 's9']
</script>

<template>
  <div class="app">
    <header class="top">
      <div class="titlebar">
        <span class="logo">SE</span>
        <nav class="quick" aria-label="Quick access">
          <button v-for="(q, i) in quick" :key="i" :class="['q', q]" :aria-label="q"><Icon :n="q" :s="q.startsWith('car') ? 9 : 16" /></button>
        </nav>
        <h1>Solid Edge - Assembly - [_LIFT-demo.asm]</h1>
        <div class="wins">
          <b>SIEMENS</b>
          <button aria-label="Minimize"><Icon n="mini" :s="14" /></button>
          <button aria-label="Restore"><Icon n="rest" :s="14" /></button>
          <button aria-label="Close"><Icon n="x" :s="14" /></button>
        </div>
      </div>
      <div class="menu">
        <nav class="tabs">
          <button v-for="t in tabs" :key="t" :class="{ on: t === 'PMI', file: t === 'File' }">{{ t }}</button>
        </nav>
        <div class="tools">
          <label class="find"><input v-model="find" placeholder="Type to find tools" aria-label="Find tools" /><Icon n="mag" /></label>
          <button aria-label="Like"><Icon n="smile" /></button>
          <button aria-label="Dislike"><Icon n="sad" /></button>
          <button aria-label="Help"><Icon n="help" /></button>
          <button class="sm" aria-label="Minimize document"><Icon n="mini" :s="8" /></button>
          <button class="sm" aria-label="Restore document"><Icon n="rest" :s="10" /></button>
          <button class="sm" aria-label="Close document"><Icon n="x" :s="9" /></button>
        </div>
      </div>
    </header>

    <section class="ribbon">
      <div class="group g-select">
        <div class="body">
          <button class="big sel"><Icon n="cursor" :s="32" :v="32" /><span>Select</span><Icon n="car" :s="10" /></button>
          <div class="grid3">
            <button aria-label="Filter"><Icon n="filt" /></button>
            <button aria-label="Select tools"><Icon n="selbox" /></button>
            <button aria-label="Tag"><Icon n="tag" /><Icon n="car" :s="10" /></button>
            <button class="hl" aria-label="Part priority"><Icon n="selo" /><Icon n="car" :s="10" /></button>
            <button aria-label="Part"><Icon n="part" /></button>
            <button aria-label="Parts"><Icon n="parts" /></button>
            <button class="hl" aria-label="Fence"><Icon n="dash" /><Icon n="car" :s="10" /></button>
            <button aria-label="Inside"><Icon n="grays" /><Icon n="car" :s="10" /></button>
          </div>
        </div>
        <h2>Select</h2>
      </div>
      <div class="group g-tools">
        <div class="body">
          <button class="big"><Icon n="lock" :s="32" :v="32" /><span>Lock<br />Plane</span></button>
          <div class="list">
            <button><Icon n="axis" />Set Axis</button>
            <button><Icon n="move" />Move</button>
            <button><Icon n="copyp" />Copy to PMI</button>
          </div>
        </div>
        <h2>Tools</h2>
      </div>
      <div class="group g-dim">
        <div class="body">
          <button class="big wide"><Icon n="smart" :s="32" :v="32" /><span>Smart<br />Dimension</span></button>
          <div class="dims">
            <button aria-label="Distance"><Icon n="d1" /></button>
            <button aria-label="Coordinate"><Icon n="d3" /></button>
            <button aria-label="Remove"><Icon n="d4" /></button>
            <button aria-label="Angle"><Icon n="d2" /></button>
            <button aria-label="Diameter"><Icon n="d5" /></button>
            <button aria-label="Attach"><Icon n="d6" /></button>
            <button aria-label="Chain"><Icon n="d7" /><Icon n="car" :s="10" /></button>
            <button class="hl" aria-label="Lock dimension"><Icon n="d8" :s="18" /></button>
          </div>
          <div class="sizes">
            <button aria-label="Style"><Icon n="a1" /></button>
            <label><input v-model="pmiSize" type="radio" value="model" name="pmi" />Model Size PMI</label>
            <button aria-label="Increase font"><Icon n="a2" /></button>
            <label><input v-model="pmiSize" type="radio" value="pixel" name="pmi" />Pixel Size PMI</label>
            <button aria-label="Decrease font"><Icon n="a3" /></button>
          </div>
        </div>
        <h2>Dimension</h2>
      </div>
      <div class="group g-ann">
        <div class="body">
          <div class="notes">
            <template v-for="(n, i) in notes" :key="i">
              <button v-if="n" :aria-label="'Annotation ' + (i + 1)"><Icon :n="n" /></button><span v-else></span>
            </template>
          </div>
        </div>
        <h2>Annotation</h2>
      </div>
      <div class="group g-prop">
        <div class="body">
          <div class="list">
            <button><Icon n="upd" />Update All</button>
            <button><Icon n="conv" />Convert All</button>
          </div>
        </div>
        <h2>Property Text</h2>
      </div>
      <div class="group g-views">
        <div class="body">
          <button class="big"><Icon n="secp" :s="32" :v="32" /><span>Section<br />by Plane</span></button>
          <button class="big"><Icon n="sect" :s="32" :v="32" /><span>Section</span></button>
          <button class="big"><Icon n="mview" :s="32" :v="32" /><span>Model<br />View<i>▾</i></span></button>
          <button class="big wide"><Icon n="mpal" :s="32" :v="32" /><span>Model View<br />Palette</span></button>
        </div>
        <h2>Model Views</h2>
      </div>
      <div class="group g-pdf">
        <div class="body">
          <div class="list">
            <button><Icon n="pdf" />Publish 3D PDF</button>
            <button><Icon n="tmpl" />Template Editor</button>
          </div>
        </div>
        <h2>3D PDF Publishing</h2>
      </div>
    </section>

    <main class="main">
      <div class="work">
        <div class="docbar">
          <div class="doctab"><Icon n="tabdoc" /><span>_LIFT-demo.asm</span><button aria-label="Close tab"><Icon n="x" :s="12" /></button></div>
          <div class="docnav">
            <button aria-label="Previous"><Icon n="tl" :s="14" /></button>
            <button aria-label="Next"><Icon n="tr" :s="14" /></button>
            <button aria-label="Documents"><Icon n="car" :s="14" /></button>
            <button aria-label="Close"><Icon n="x" :s="14" /></button>
          </div>
        </div>
        <div class="split">
          <aside class="path">
            <header class="phead"><Icon n="pf" :s="20" :v="17" /><h3>PathFinder</h3><button aria-label="Options"><Icon n="carbar" :s="11" /></button><button aria-label="Close"><Icon n="x" :s="12" /></button></header>
            <div class="search">
              <button aria-label="Filter"><Icon n="funnel" :s="13" /></button>
              <label><input v-model="query" placeholder="Type to find components" aria-label="Find components" /><Icon n="mag" :s="12" /></label>
            </div>
            <ul class="tree">
              <li class="root"><Icon n="cd" :s="10" /><Icon class="ic" n="asm" :s="15" /><Icon n="ulock" :s="14" /><span>_LIFT-demo.asm</span></li>
              <li v-for="n in nodes" :key="n.t" :class="{ off: n.off, pat: n.pat }">
                <i class="tw"><Icon v-if="n.exp" n="cr" :s="10" /></i>
                <Icon v-if="!n.pat" class="eye" :n="n.off ? 'eyeoff' : 'eye'" :s="15" />
                <Icon class="ic" :n="n.i" />
                <Icon v-if="!n.noLock && !n.pat" n="ulock" :s="14" />
                <span :class="{ hot: n.hot, lk: !n.noLock && !n.pat }">{{ n.t }}</span>
              </li>
            </ul>
            <p class="msg">No top level part selected.</p>
          </aside>

          <div class="view">
            <svg viewBox="267 180 1222 951" preserveAspectRatio="xMidYMid slice">
              <defs>
                <pattern id="grain" width="9" height="9" patternUnits="userSpaceOnUse">
                  <rect width="9" height="9" fill="#3e3c48" />
                  <path d="M1 1h1v1h-1zM5 2h2v1h-2zM3 5h1v1h-1zM7 7h1v1h-1zM0 7h2v1h-2z" fill="#4c4a58" />
                  <path d="M3 2h1v1h-1zM7 4h2v1h-2zM1 4h1v1h-1zM4 7h2v1h-2z" fill="#302f36" />
                </pattern>
                <linearGradient id="floor" x1="0" y1="0" x2=".3" y2="1"><stop offset="0" stop-color="#b4b4b4" /><stop offset=".25" stop-color="#c4c4c4" /><stop offset="1" stop-color="#cccccc" /></linearGradient>
                <linearGradient id="refl" x1="0" y1="0" x2="0" y2="1"><stop offset="0" stop-color="#eff0f0" /><stop offset="1" stop-color="#f8f9f9" /></linearGradient>
                <linearGradient id="panel" x1="0" y1="0" x2="0" y2="1"><stop offset="0" stop-color="#b4bbd0" /><stop offset=".16" stop-color="#dbe3fb" /><stop offset=".9" stop-color="#dce2fc" /><stop offset="1" stop-color="#bcc3d8" /></linearGradient>
                <linearGradient id="steel" x1="0" y1="0" x2="1" y2="0"><stop offset="0" stop-color="#b6bec2" /><stop offset="1" stop-color="#cbd3d6" /></linearGradient>
                <linearGradient id="shade" x1="0" y1="0" x2="1" y2="0"><stop offset=".92" stop-color="#444" stop-opacity="0" /><stop offset="1" stop-color="#444" stop-opacity=".55" /></linearGradient>
                <radialGradient id="soft"><stop offset="0" stop-color="#555" stop-opacity=".4" /><stop offset="1" stop-color="#555" stop-opacity="0" /></radialGradient>
                <clipPath id="top"><path d="M491 441L782 420V477L737 481 679 479 640 474 595 466 547 461 520 457 500 450Z" /></clipPath>
                <clipPath id="ground"><path d="M730 817L776 802 909 755 1121 877 921 983Z" /></clipPath>
              </defs>
              <path d="M545 929L745 853 776 876V1068L740 1087 700 1079 677 1063 640 1031 597 1009 571 989 556 966Z" fill="url(#refl)" />
              <path d="M545 929L556 966 571 989 597 1009 640 1031 677 1063 700 1079 740 1087 773 1069V1083L740 1101 700 1093 677 1077 640 1045 598 1023 573 1003 557 977Z" fill="#eeefef" />
              <path d="M775 868L806 895 800 1130H773Z" fill="#f4f6f6" />
              <path d="M805 894L887 985V1043L797 1094Z" fill="#f5f7fa" />
              <path d="M791 1094L887 1043 945 1100 957 1130H791Z" fill="url(#refl)" />
              <path d="M888 1004L899 1000V1013L888 1019Z" fill="#dfe0e0" />
              <path d="M730 831L920 1001 1119 893 1116 908 919 1018 731 845Z" fill="#e4e5e5" />

              <path d="M491 441L782 420V477L737 481 679 479 640 474 595 466 547 461 520 457 500 450Z" fill="#e8e8e8" stroke="#777" stroke-width=".7" />
              <g clip-path="url(#top)" stroke="#9f9f9f" stroke-width=".7" fill="none">
                <path d="M516 440L690 482M545 438L750 482M575 436L790 478M603 433L790 467M630 431L790 457M655 429L790 449M680 427L790 442M705 425L790 435M730 424L790 429" />
                <path d="M500 450L790 424M520 457L790 430M547 461L790 436M580 464L790 443M620 470L790 450M655 477L790 459M695 480L790 468" stroke="#bdbdbd" />
              </g>
              <path d="M491 420H782V481H491Z" fill="url(#shade)" clip-path="url(#top)" />
              <path d="M491 441L500 450 520 457 547 461 595 466 640 474 679 479 737 481 782 476V502L736 508 680 505 640 498 600 491 560 486 518 479 503 471 492 460Z" fill="url(#grain)" />
              <path d="M737 481V508" stroke="#77757f" />

              <path d="M730 817L776 802 909 755 1121 877 921 983Z" fill="url(#floor)" stroke="#888" stroke-width=".8" />
              <g clip-path="url(#ground)"><ellipse cx="860" cy="800" rx="115" ry="36" fill="url(#soft)" /><ellipse cx="990" cy="862" rx="34" ry="80" fill="url(#soft)" /></g>
              <path d="M730 817L921 983 920 1001 730 831Z" fill="url(#grain)" />
              <path d="M921 983L1121 877 1119 893 920 1001Z" fill="url(#grain)" />

              <path d="M906 294H945L942 324H906Z" fill="#a5adae" stroke="#666" /><path d="M927 293H944L941 324H924Z" fill="#c9d0e8" />
              <path d="M911 295V322M915 295V322M920 295V322M925 294L923 322M929 294L927 322M936 294L934 322M939 294L938 322" stroke="#777" stroke-width=".8" fill="none" />
              <path d="M907 294H944" stroke="#555" stroke-width="1.500" />
              <path d="M820 304H824V321H820Z" fill="#aab" stroke="#777" stroke-width=".6" />

              <path d="M816 488L911 515 893 787 809 816Z" fill="url(#panel)" stroke="#666" />
              <path d="M911 510H928L907 783 893 787Z" fill="#c5cce2" />
              <g stroke="#63656b" fill="none">
                <path d="M816 540L911 524M816 544L910 529M814 616L906 596M814 620L905 600M813 687L901 662M812 690L901 666M811 752L897 725M810 755L896 729M809 813L893 784M809 817L893 788" stroke-width="1.400" />
                <path d="M911 515L893 787M914 515L896 786M927 515L907 783" />
                <path d="M919 515L901 785M922 515L904 784" stroke-width="1.500" />
              </g>

              <path d="M782 292H804L793 824 776 812Z" fill="#00e32b" />
              <path d="M804 290L821 291V293L809 815 793 824Z" fill="#00ee30" />
              <path d="M782 292L796 290H821V293L804 294H782Z" fill="#00f232" />
              <path d="M804 294L796 824" stroke="#00fb5a" fill="none" />
              <path d="M807 294L797 822" stroke="#0a9c25" stroke-width=".8" stroke-dasharray="6 3 2 7" fill="none" />
              <path d="M784 300L778 810M798 300L788 816" stroke="#06b827" stroke-width=".8" stroke-dasharray="2 17 5 23" fill="none" />

              <path d="M819 323L1113 321V327L1086 505 1070 509 976 526 952 529 815 490Z" fill="#505153" />
              <path d="M819 323L985 322V327L819 328Z" fill="#646667" />
              <path d="M815 486L955 523 953 529 815 490Z" fill="#6c6d6e" />
              <path d="M825 349L832 342 925 343Q950 346 952 362L947 455 943 488 935 498 922 499 823 476Z" fill="#434447" />
              <path d="M826 348L832 342H916L908 466 823 474Z" fill="#66737f" />
              <path d="M905 343H916L908 466 898 467Z" fill="#556877" />
              <path d="M823 420L850 423 880 433 899 443 898 466 823 474Z" fill="#5c6a76" />
              <path d="M824 430L870 429M824 438L898 443M823 447L898 447M823 456L898 454M823 464L898 460M830 420L880 468M850 422L898 462" stroke="#4d5a65" stroke-width=".6" fill="none" />
              <path d="M916 343H924L917 467H908Z" fill="#737077" /><path d="M925 343H928L919 468 916 467Z" fill="#85868c" />
              <path d="M908 383H914L912 409H906Z" fill="#4f4b55" stroke="#403d45" />
              <path d="M827 477L908 464 919 468 830 479Z" fill="#8b8b8c" /><path d="M823 466H830L832 474 823 475Z" fill="#444" />
              <path d="M934 346L928 467M941 349L935 468" stroke="#505156" fill="none" stroke-width="2" />
              <path d="M830 479L919 468 945 472 943 488 935 498 922 499Z" fill="#303031" />
              <path d="M948 357L953 363 951 430 946 457 941 440 943 385Z" fill="#6f716d" />
              <path d="M972 326L982 328 966 521 954 527Z" fill="#74757e" />
              <path d="M1090 321H1113V327L1086 505 1070 504 1067 496Z" fill="#6a6b75" stroke="#4c4d52" />
              <path d="M1098 323L1073 499M1102 323L1078 500" stroke="#4c4d52" fill="none" />
              <path d="M1107 325L1082 502" stroke="#767782" stroke-width="6" fill="none" />
              <path d="M967 519L1065 499 1072 507 976 525Z" fill="#3f4040" /><path d="M968 513L975 512 973 524 966 522Z" fill="#666872" />
              <path d="M978 319H987V324H978Z" fill="#555" />
              <path d="M987 322L1091 322 1079 397 1074 406 1072 420 1075 425 1067 494 969 509 966 500 982 333 986 332Z" fill="#2f6ca8" />
              <path d="M984 338L1072 341 1083 347 1081 385 1068 475 1053 480 973 467Z" fill="#4d84ba" />
              <path d="M972 475L1040 492 1035 498 970 507Z" fill="#1d5590" />
              <path d="M1005 327L1012 327 1010 333H1004ZM1017 327H1023L1021 333H1016Z" fill="#5288bd" />
              <path d="M987 322L1091 322 1080 395 1080 403 1074 406 1073 417 1077 420 1075 427 1067 494 969 509 969 501 966 499 982 333 986 332Z" fill="none" stroke="#f2a33c" stroke-width="1.700" />
              <path d="M1089 325L1078 393M983 336L968 498" fill="none" stroke="#a78855" stroke-width="1" />
              <path d="M987 324H999L997 333 986 333Z" fill="#726d70" /><path d="M970 498L982 498 980 505 970 506Z" fill="#726d70" />
              <g fill="none" stroke="#f2a33c" stroke-width="1.200"><circle cx="990" cy="328" r="2" /><circle cx="997" cy="328" r="2" /><circle cx="974" cy="503" r="2" /><circle cx="980" cy="502" r="2" /><circle cx="1077" cy="399" r="2" /><circle cx="1074" cy="423" r="2" /><path d="M976 415H978V423H975" /></g>
              <path d="M1082 396H1088L1084 426H1077" fill="#65666f" stroke="#4c4d52" />

              <g stroke="#7c35b5" fill="none" stroke-width=".8"><path d="M903 463L995 452M992 452L977 600M975 617L963 744M883 773L965 744" /></g>
              <path d="M992 453L994 461 991 461ZM963 745L962 732 965 732Z" fill="#7c35b5" />
              <text x="968" y="614" class="dim" transform="rotate(-6 968 614)">3000</text>

              <path d="M959 930L973 940 986 934 980 927Z" fill="#9b9b9b" stroke="#555" />
              <path d="M980 800L987 817 973 937 965 929Z" fill="url(#steel)" stroke="#666" />
              <path d="M987 817L996 812 981 930 973 937Z" fill="#dbe2fb" stroke="#666" />
              <path d="M980 800L984 796 991 795 995 811 987 817Z" fill="#b5babc" stroke="#555" /><path d="M987 803L990 802 992 808 989 811Z" fill="#d5dde0" stroke="#555" />

              <g transform="translate(1114 365)"><rect x="1" y="1" width="119" height="10" fill="#777" opacity=".5" /><rect x=".5" y=".5" width="118" height="9" fill="#fff" stroke="#555" /><text x="2" y="7" class="tip">F500.15.7001_0.par:1 in PF500.0015.asm:1</text></g>

              <g stroke="#aaa" stroke-width="1">
                <path d="M1384 1035L1428 1027 1459 1040 1411 1049Z" fill="#fff" /><path d="M1384 1035L1411 1049 1412 1103 1387 1083Z" fill="#fff" /><path d="M1411 1049L1459 1040 1457 1089 1412 1103Z" fill="#ebebeb" />
              </g>
              <text x="1425" y="1077" class="cube" transform="rotate(-10 1425 1077)">TOP</text>
              <text x="1393" y="1054" class="cube c2" transform="rotate(86 1393 1054)">LEFT</text>
              <text x="1434" y="1033" class="cube c3" transform="rotate(172 1434 1033)">BACK</text>
              <path d="M1420 1062V1038" stroke="#5fe05f" /><path d="M1420 1062L1440 1058" stroke="#e66" /><path d="M1420 1062L1434 1070" stroke="#66e" stroke-width="1.500" />
              <circle cx="1420" cy="1062" r="2.500" fill="#e3d91c" stroke="#a89" stroke-width=".5" />
            </svg>
          </div>
        </div>
      </div>

      <aside class="conf">
        <header class="chead"><Icon n="dc" :s="20" /><h3>Design Configurator</h3><button aria-label="Options"><Icon n="carbar" :s="11" /></button><button aria-label="Pin"><Icon n="pinv" :s="12" /></button><button aria-label="Close"><Icon n="x" :s="12" /></button></header>
        <nav class="ptabs"><button v-for="t in paneTabs" :key="t" :class="{ on: t === 'dc' }" :aria-label="'Pane ' + t"><Icon :n="t" :s="21" /></button></nav>
        <div class="steps">
          <span>Steps</span>
          <ol><li>1</li><li>2</li><li>3</li><li class="cur">4</li><li class="go">▶</li></ol>
          <div class="ends"><Icon n="boxes" :s="13" /><Icon n="tree" :s="12" /><Icon n="cog" :s="11" /></div>
        </div>
        <div class="band b1"><h4>Define Model Actions</h4><Icon n="sync" :s="11" /><Icon n="hq" :s="10" /></div>
        <div class="bar">
          <Icon n="stp" :s="12" /><Icon n="ply" :s="10" /><Icon n="plb" :s="11" /><span class="dis">Debugger</span><Icon n="dbg" :s="13" /><i></i>
          <button><Icon n="chk" :s="13" />Check Rules</button>
        </div>
        <div class="tabwrap">
          <table class="t1">
            <thead><tr><th>Name</th><th>Reference</th><th>Description</th></tr></thead>
            <tbody>
              <tr v-for="(m, i) in models" :key="i" :class="{ sel: i === 11, bold: i === 5 }">
                <td><div><Icon :n="m[0]" :s="12" />{{ m[1] }}</div></td><td>{{ m[2] }}</td><td></td>
              </tr>
            </tbody>
          </table>
          <div class="scroll"><div></div></div>
        </div>
        <div class="band b2"><h4>MSX100.3000.asm:1</h4><Icon n="back" :s="13" /></div>
        <div class="bar">
          <button><Icon n="addr" :s="13" />Add Model Rule</button><span class="dot">·</span><button aria-label="Delete"><Icon n="del" :s="12" /></button><i></i>
          <button><Icon n="chk" :s="13" />Check Rules</button>
        </div>
        <table class="t2">
          <thead><tr><th>Type</th><th>Reference</th><th>Expression</th></tr></thead>
          <tbody>
            <tr v-for="(r, i) in rules" :key="i" :class="{ sel: i === 9 }">
              <td><div :class="{ sub: r[4] }"><Icon :n="r[0]" :s="12" />{{ r[1] }}</div></td><td>{{ r[2] }}</td><td>{{ r[3] }}</td>
            </tr>
          </tbody>
        </table>
      </aside>
    </main>

    <footer class="status">
      <span class="pos">F500.15.7001_0.par:1 - fully positioned</span>
      <div class="sright">
        <span class="cnt">0 items are selected</span>
        <button v-for="s in statusIcons" :key="s" :aria-label="'View ' + s"><Icon :n="s" /></button>
        <button class="zo out" aria-label="Zoom out"><Icon n="minus" :s="14" /></button>
        <input v-model="zoom" type="range" min="0" max="100" aria-label="Zoom" />
        <button class="zo" aria-label="Zoom in"><Icon n="plus" :s="14" /></button>
        <button class="ex" aria-label="YouTube"><Icon n="yt" /></button>
        <button class="ex" aria-label="Record"><Icon n="rec" :s="15" /></button>
        <button class="ex" aria-label="Upload"><Icon n="up" :s="15" /></button>
      </div>
    </footer>
  </div>
</template>

<style>
html, body { height: 100%; margin: 0; }
</style>

<style scoped>
.app { display: flex; flex-direction: column; min-height: 100vh; background: #fff; color: #262626; font: 11px/14px "Open Sans", "Noto Sans", sans-serif; overflow: hidden; }
* { box-sizing: border-box; }
button { display: flex; align-items: center; margin: 0; padding: 0; border: 0; background: none; color: inherit; font: inherit; }
h1, h2, h3, h4, ul, ol, p { margin: 0; padding: 0; font: inherit; list-style: none; }
input { font: inherit; color: inherit; }

.top { height: 60px; background: linear-gradient(90deg, #006487 52%, #257f9f 72%, #55a0b9 100%); color: #e6f1f5; border-bottom: 1px solid #b9c9cf; }
.titlebar { display: grid; grid-template-columns: 1fr auto 1fr; align-items: center; height: 34px; grid-template-areas: "q t w"; }
.logo { grid-area: q; width: 26px; height: 26px; margin: -4px 0 0 6px; background: #2a4aae; border: 1px solid #7c9ad0; color: #fff; font: bold 12px/26px "Open Sans", sans-serif; text-align: center; }
.quick { grid-area: q; display: flex; align-items: center; margin-left: 54px; height: 30px; color: #fff; }
.quick .q { width: 22px; height: 22px; justify-content: center; }
.quick .car, .quick .carbar { width: 12px; }
.quick .list { width: 29px; justify-content: flex-start; padding-left: 4px; }
.quick .undoall { width: 24px; }
h1 { grid-area: t; font-size: 13px; line-height: 18px; padding-top: 2px; }
.wins { grid-area: w; display: flex; justify-content: flex-end; align-items: center; gap: 19px; padding-right: 9px; color: #fff; }
.wins b { font: bold 11px/14px "Open Sans", sans-serif; margin-right: -3px; }
.menu { display: flex; justify-content: space-between; height: 25px; }
.tabs { display: flex; font-size: 13px; }
.tabs button { padding: 4px 15px 0 16px; border-bottom: 2px solid transparent; }
.tabs .file { padding: 4px 27px 0 20px; }
.tabs .on { color: #f0bd45; border-color: #f0bd45; }
.tools { display: flex; align-items: center; gap: 6px; padding-right: 4px; }
.tools .sm { width: 11px; justify-content: center; }
.find { display: flex; align-items: center; width: 141px; height: 22px; padding: 0 3px; margin-right: 40px; background: #fff; border: 1px solid #d5e3e8; color: #222; }
.find input { width: 100%; min-width: 0; border: 0; outline: 0; padding: 2px 0 0; background: none; }
::placeholder { color: inherit; opacity: 1; }

.ribbon { display: flex; height: 94px; padding-top: 5px; border-bottom: 1px solid #d5d5d5; }
.group { display: flex; flex-direction: column; height: 83px; border-right: 1px solid #dedede; }
.body { display: flex; height: 69px; }
h2 { text-align: center; line-height: 14px; }
.g-select { width: 163px; padding-left: 8px; }
.g-select h2 { margin-left: -10px; }
.g-tools { width: 144px; }
.g-dim { width: 282px; }
.g-dim h2, .g-ann h2 { margin-left: 4px; }
.g-ann { width: 121px; }
.g-prop { width: 93px; }
.g-views { width: 212px; }
.g-pdf { width: 117px; }
.big { flex-direction: column; width: 46px; gap: 4px; text-align: center; padding-top: 4px; }
.big.wide { width: 64px; }
.big i { font-style: normal; }
.big.sel { width: 45px; gap: 2px; height: 66px; background: #cde4ea; color: #555; }
.big.sel svg:last-child { margin-top: auto; color: #111; }
.hl { background: #cde4ea; }
.grid3 { display: grid; grid-template-columns: 35px 35px 35px; grid-auto-rows: 22px; gap: 0 1px; margin-left: 1px; }
.grid3 button { padding-left: 3px; gap: 3px; height: 21px; }
.g-tools .big { width: 54px; margin-left: 1px; }
.list { display: grid; grid-auto-rows: 22px; padding-top: 1px; white-space: nowrap; }
.list button { gap: 2px; }
.g-dim .big { margin-left: 4px; }
.dims { display: grid; grid-template-columns: 31px 24px 25px; grid-auto-rows: 22px; }
.dims button { height: 21px; padding-left: 0; gap: 0; }
.dims .hl { width: 22px; justify-content: center; }
.sizes { display: grid; grid-template-columns: 20px auto; grid-auto-rows: 22px; align-items: center; padding-left: 5px; border-left: 1px solid #dedede; white-space: nowrap; column-gap: 2px; }
.sizes label { display: flex; align-items: center; gap: 5px; }
.sizes input { appearance: none; width: 14px; height: 14px; margin: 0; border: 1px solid #aaa; border-radius: 50%; background: #fff; }
.sizes input:checked { background: radial-gradient(circle, #666 2px, #fff 4px); }
.notes { display: grid; grid-template-columns: repeat(5, 22px); grid-auto-rows: 22px; padding-left: 6px; }
.notes button { justify-content: center; }
.g-prop .body { padding-left: 10px; }
.g-views .big { width: 45px; }
.g-views .big:first-child { margin-left: 8px; }
.g-views .wide { width: 64px; }
.g-pdf .body { padding-left: 10px; }

.main { flex: 1; display: grid; grid-template-columns: minmax(0, 1fr) 555px; min-height: 0; }
.work { display: flex; flex-direction: column; border-right: 4px solid #d9d9d9; }
.docbar { display: flex; justify-content: space-between; height: 26px; padding-left: 2px; border-bottom: 1px solid #b7d5de; }
.doctab { display: flex; align-items: center; gap: 4px; width: 147px; padding: 1px 2px 0 11px; background: #006487; color: #eef6f9; font-size: 12px; margin-top: 1px; white-space: nowrap; }
.doctab button { margin-left: auto; }
.docnav { display: flex; align-items: center; gap: 1px; padding-right: 1px; }
.split { flex: 1; display: grid; grid-template-columns: 267px minmax(0, 1fr); }
.path { display: flex; flex-direction: column; border: solid #9ab3d6; border-width: 0 1px; }
.phead, .chead { display: flex; align-items: center; height: 20px; background: #11779b; color: #eaf4f7; font-size: 12px; }
.phead { padding: 0 7px 0 5px; gap: 7px; }
h3 { flex: 1; }
.phead h3 { margin-left: -4px; padding-top: 1px; }
.search { display: flex; gap: 2px; height: 26px; padding: 4px 3px 0; color: #555; }
.search button { width: 19px; height: 20px; justify-content: center; border: 1px solid #e2e2e2; }
.search label { flex: 1; display: flex; align-items: center; padding-left: 4px; border-bottom: 1px solid #bbb; background: #fcfcfc; height: 21px; }
.search input { flex: 1; min-width: 0; padding: 0 0 2px; border: 0; outline: 0; background: none; }
.tree { display: grid; grid-auto-rows: 1fr; height: 730px; margin-top: 4px; }
.tree li { display: flex; align-items: center; padding-left: 31px; white-space: nowrap; }
.tree .root { padding-left: 10px; }
.root .ic { margin: 0 2px 0 5px; }
.root span { margin-left: 3px; }
.tw { width: 10px; }
.eye { margin: 0 6px 0 5px; }
.tree .ic + svg { margin-left: 3px; }
.tree .ic + span { margin-left: 1px; }
.lk { margin-left: 2px; padding: 0 1px; }
.pat .ic { margin: 0 2px 0 3px; }
.off { color: #7d7d7d; }
.hot { background: #fadcbc; }
.msg { margin: 105px 4px 0 3px; padding: 6px 0 0 19px; border-top: 1px solid #f3f3f3; }
.view { background: #f9fbfa; display: flex; min-width: 0; }
.view svg { width: 100%; height: 100%; display: block; }
.dim { font: italic 9px "Liberation Sans", sans-serif; fill: #7c35b5; }
.tip { font: 6px "Liberation Sans", sans-serif; fill: #222; }
.cube { font: 12px "Open Sans", sans-serif; fill: #555; }
.c2 { font-size: 11px; }
.c3 { font-size: 9px; }

.conf { display: flex; flex-direction: column; min-width: 0; background: #fff; font: 13px/17px "Liberation Sans", Arial, sans-serif; color: #111; border-top: 1px solid #cfe0e6; }
.chead { padding: 0 7px 0 5px; gap: 7px; font: 12px/16px "Open Sans", sans-serif; }
.chead h3 { margin-left: -4px; padding-top: 1px; }
.ptabs { display: flex; height: 27px; background: #f4f4f4; border-bottom: 1px solid #dcdcdc; }
.ptabs button { width: 31px; justify-content: center; border-right: 1px solid #e2e2e2; }
.ptabs .on { background: #fff; border-top: 2px solid #2c55a8; margin-bottom: -1px; }
.steps { display: flex; align-items: center; height: 22px; padding-left: 3px; gap: 6px; background: #f0f0f0; font: 12px/16px "Open Sans", sans-serif; }
.steps ol { display: flex; gap: 5px; background: linear-gradient(#1d6f8e, #1d6f8e) center / 100% 1px no-repeat; }
.steps li { width: 17px; height: 18px; border-radius: 4px; background: #1d6f8e; border: 1px solid #2d87a0; color: #d7e8ee; font-size: 9px; line-height: 16px; text-align: center; }
.steps .cur { background: #f58a1f; border-color: #dd7a1a; color: #b9560c; }
.steps .go { background: #c8cf8c; border-color: #b5bd78; color: #fff; }
.ends { display: flex; gap: 6px; margin-left: auto; padding-right: 5px; align-items: center; }
.band { display: flex; align-items: center; gap: 14px; height: 26px; padding: 0 9px 0 4px; background: #e0e0e0; }
.b1 { border-bottom: 1px solid #c0c0c0; }
h4 { flex: 1; color: #2c57a0; font-weight: bold; }
.bar { display: flex; align-items: center; gap: 4px; height: 21px; padding-left: 1px; background: #f8f8f8; font: 12px/16px "Open Sans", sans-serif; white-space: nowrap; }
.bar button { gap: 3px; }
.bar i { width: 1px; height: 16px; background: #ddd; }
.b1 + .bar { padding-left: 4px; }
.dis { color: #999; margin-left: 2px; }
.dot { margin-left: 1px; }
.tabwrap { display: flex; height: 265px; padding-right: 3px; }
.scroll { width: 15px; height: 261px; background: #f0f0f0; padding: 192px 0 0 4px; }
.scroll div { height: 51px; background: #858585; }
table { border-collapse: collapse; table-layout: fixed; width: 100%; }
.t1 { height: 249px; flex: 1; }
.t2 { height: 197px; }
th, td { padding: 0 0 0 4px; font: inherit; line-height: 16px; text-align: left; white-space: nowrap; }
th { height: 20px; line-height: 19px; border-right: 1px solid #e8e8e8; }
th:last-child { border-right: 0; }
.t1 th:nth-child(1) { width: 184px; }
.t1 th:nth-child(2) { width: 176px; }
.t2 th:nth-child(1) { width: 105px; }
.t2 th:nth-child(2) { width: 119px; }
td div { display: flex; align-items: center; gap: 3px; margin-left: -1px; }
td .sub { border-left: 1px solid #bbb; padding-left: 3px; }
.sel { background: #eee; }
.big.sel { background: #cde4ea; }
.bold td:first-child { font-weight: bold; }

.status { display: flex; align-items: center; justify-content: space-between; height: 21px; padding-left: 611px; background: #006487; color: #e6f1f5; font-size: 12px; line-height: 16px; white-space: nowrap; }
.status .pos { padding-top: 4px; }
.sright { display: flex; align-items: center; }
.cnt { width: 139px; padding-top: 4px; }
.sright button { width: 23px; justify-content: center; }
.sright button.zo { width: 20px; }
.sright button.out { margin-left: 3px; }
.sright button.ex { width: 25px; }
.sright input { appearance: none; width: 125px; height: 14px; margin: 0; background: linear-gradient(#9cc5d3, #9cc5d3) center / 100% 1px no-repeat; }
.sright input::-webkit-slider-thumb { appearance: none; width: 8px; height: 12px; background: linear-gradient(90deg, #fff 3px, #e8743b 3px 4px, #fff 4px); border-radius: 0 0 4px 4px; border: 1px solid #fff; }
</style>
